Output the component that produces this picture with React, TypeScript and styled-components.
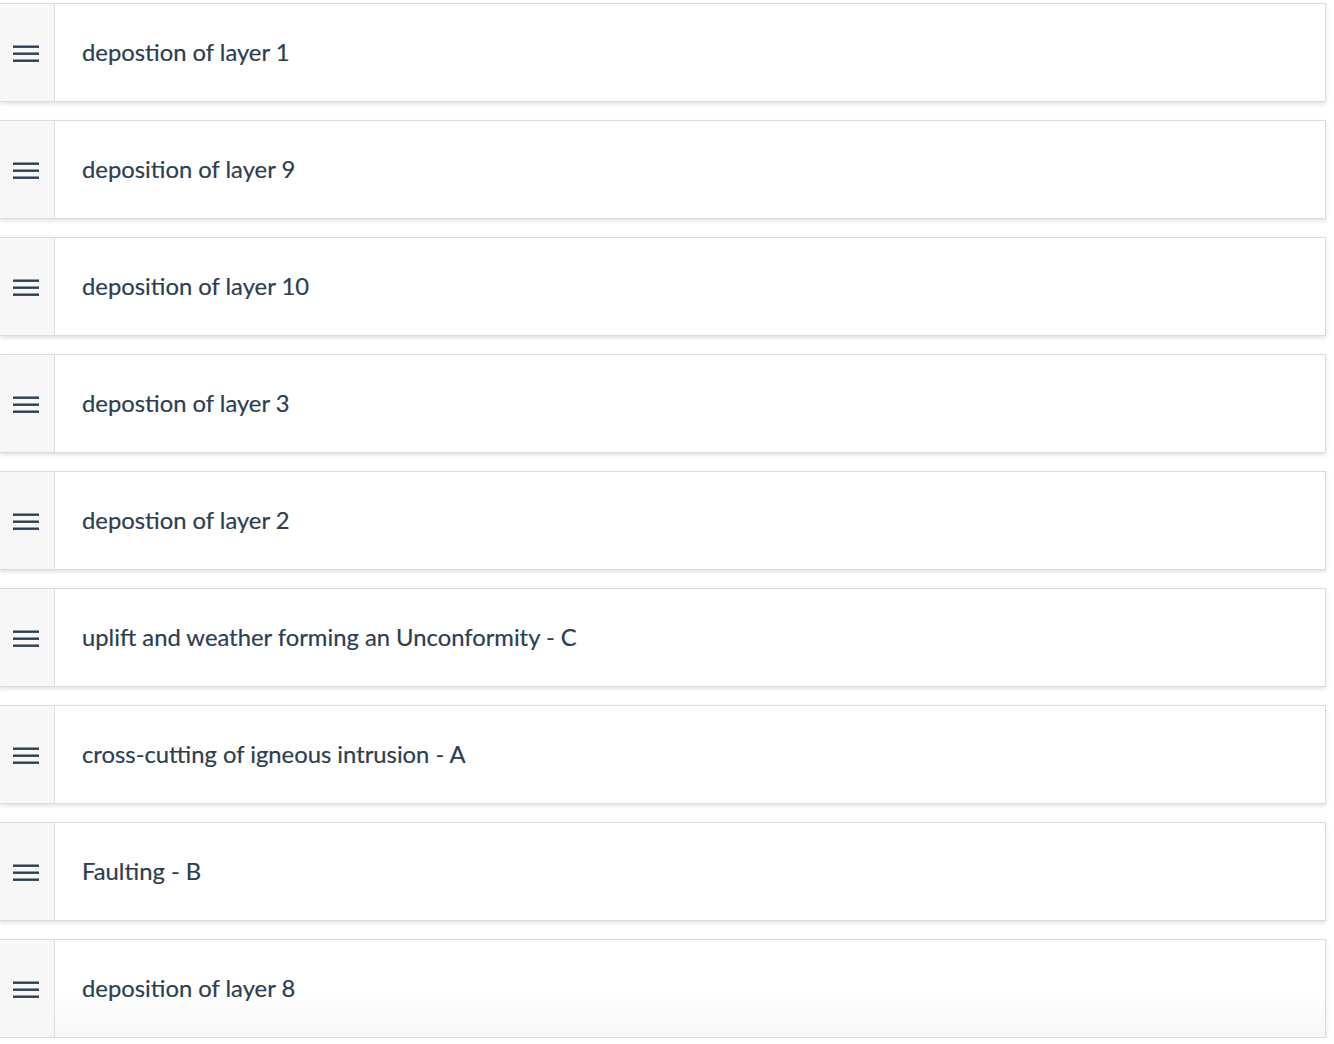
import React from "react";
import styled, { createGlobalStyle } from "styled-components";

const Global = createGlobalStyle`
  html, body { margin: 0; padding: 0; background: #ffffff; }
  body { font-family: "Source Sans Pro", Lato, "Open Sans", sans-serif; }
`;

const List = styled.ul`
  list-style: none;
  margin: 0;
  padding: 3px 8px 0 0;
  display: flex;
  flex-direction: column;
  gap: 18px;
`;

const Card = styled.li<{ $fade?: boolean }>`
  display: flex;
  height: 99px;
  box-sizing: border-box;
  border: 1px solid #dcdcdc;
  border-left: none;
  background: ${(p) =>
    p.$fade
      ? "linear-gradient(to bottom, #ffffff 0%, #ffffff 55%, #f6f6f6 100%)"
      : "#ffffff"};
  box-shadow: 0 2px 4px rgba(0, 0, 0, 0.12);
`;

const Handle = styled.div`
  width: 55px;
  flex: none;
  box-sizing: border-box;
  background: #f7f7f7;
  border-right: 1px solid #dddddd;
  display: flex;
  align-items: center;
  justify-content: center;
  padding-right: 3px;
  color: #2c3e50;
  cursor: grab;
`;

const Label = styled.span`
  display: flex;
  align-items: center;
  padding-left: 27px;
  padding-bottom: 1px;
  font-family: Lato, "Open Sans", sans-serif;
  font-size: 23.8px;
  color: #2c3e50;
  -webkit-text-stroke: 0.2px #2c3e50;
`;

const MenuIcon = () => (
  <svg width="26" height="18" viewBox="0 0 26 18" aria-hidden="true">
    <rect x="0" y="1.5" width="26" height="2.4" fill="currentColor" />
    <rect x="0" y="8.5" width="26" height="2.4" fill="currentColor" />
    <rect x="0" y="15.5" width="26" height="2.4" fill="currentColor" />
  </svg>
);

const items = [
  "depostion of layer 1",
  "deposition of layer 9",
  "deposition of layer 10",
  "depostion of layer 3",
  "depostion of layer 2",
  "uplift and weather forming an Unconformity - C",
  "cross-cutting of igneous intrusion - A",
  "Faulting - B",
  "deposition of layer 8",
];

export default function App() {
  return (
    <>
      <Global />
      <List>
        {items.map((t, i) => (
          <Card key={i} $fade={i === items.length - 1}>
            <Handle>
              <MenuIcon />
            </Handle>
            <Label>{t}</Label>
          </Card>
        ))}
      </List>
    </>
  );
}
